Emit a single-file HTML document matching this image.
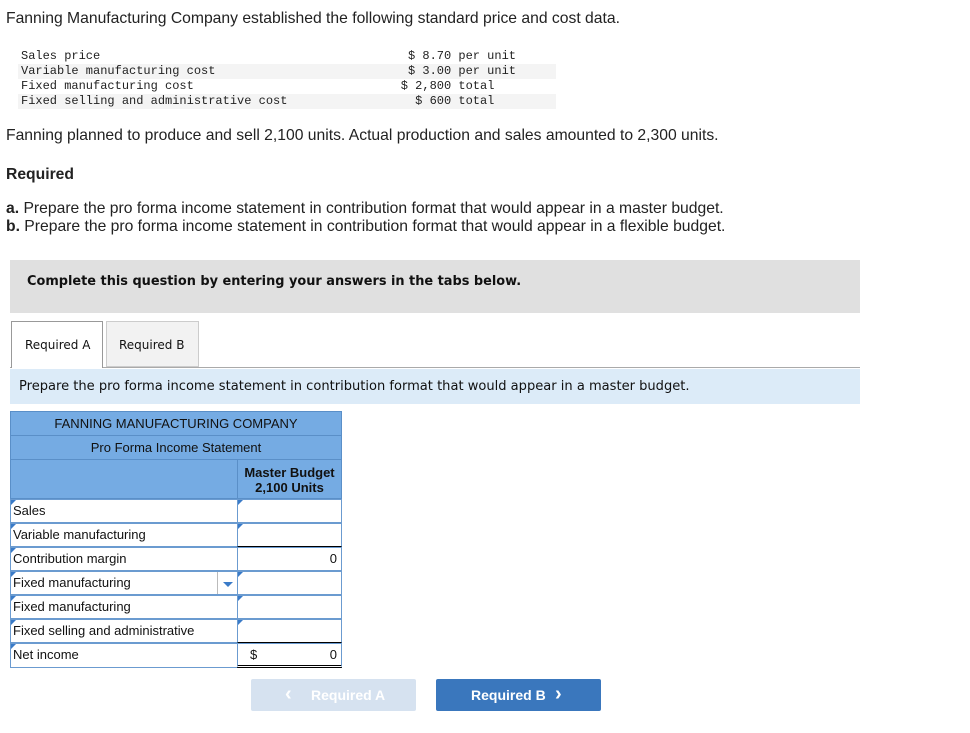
<!DOCTYPE html>
<html><head><style>
body{margin:0;width:970px;height:733px;background:#fff;font-family:"Liberation Sans",sans-serif;color:#222;position:relative;overflow:hidden}
.a{position:absolute;white-space:nowrap}
.m{font-family:"Liberation Mono",monospace;font-size:12px;color:#222}
.t{font-size:15.7px}
.c{position:absolute;box-sizing:border-box;font-family:"Liberation Sans",sans-serif;font-size:13px;color:#111}
.hd{background:#75abe3;border:1px solid #5a8fc8}
.cl{background:#fff;border:1px solid #6b9bd0;padding-left:2px;line-height:22px}
.tri{position:absolute;left:0;top:0;width:0;height:0;border-top:5px solid #3a7bc8;border-right:5px solid transparent}
</style></head><body>
<div class="a t" style="left:6px;top:10px">Fanning Manufacturing Company established the following standard price and cost data.</div>
<div class="a" style="left:18px;top:64px;width:538px;height:15px;background:#f4f4f4"></div>
<div class="a" style="left:18px;top:94px;width:538px;height:15px;background:#f4f4f4"></div>
<div class="a m" style="left:21px;top:49px;line-height:15px">Sales price<br>Variable manufacturing cost<br>Fixed manufacturing cost<br>Fixed selling and administrative cost</div>
<div class="a m" style="left:380px;top:49px;width:136px;line-height:15px;text-align:right">$ 8.70 per unit<br>$ 3.00 per unit<br>$ 2,800 total&nbsp;&nbsp;&nbsp;<br>$ 600 total&nbsp;&nbsp;&nbsp;</div>
<div class="a t" style="left:6px;top:127px">Fanning planned to produce and sell 2,100 units. Actual production and sales amounted to 2,300 units.</div>
<div class="a t" style="left:6px;top:166px;font-weight:bold">Required</div>
<div class="a t" style="left:6px;top:200px;line-height:18px"><b>a.</b> Prepare the pro forma income statement in contribution format that would appear in a master budget.<br><b>b.</b> Prepare the pro forma income statement in contribution format that would appear in a flexible budget.</div>
<div class="a" style="left:10px;top:260px;width:850px;height:53px;background:#e0e0e0"></div>
<div class="a" style="left:27px;top:274px;font-family:'DejaVu Sans',sans-serif;font-weight:bold;font-size:12.9px;color:#111">Complete this question by entering your answers in the tabs below.</div>
<div class="a" style="left:10px;top:367px;width:850px;height:1px;background:#aaa"></div>
<div class="a" style="left:11px;top:321px;width:92px;height:47px;border:1px solid #999;border-bottom:none;background:#fff;box-sizing:border-box"></div>
<div class="a" style="left:106px;top:321px;width:93px;height:46px;border:1px solid #ccc;background:#f2f2f2;box-sizing:border-box"></div>
<div class="a" style="left:25px;top:338px;font-family:'DejaVu Sans',sans-serif;font-size:12px;color:#111">Required A</div>
<div class="a" style="left:119px;top:338px;font-family:'DejaVu Sans',sans-serif;font-size:12px;color:#111">Required B</div>
<div class="a" style="left:10px;top:369px;width:850px;height:35px;background:#dcebf8"></div>
<div class="a" style="left:19px;top:379px;font-family:'DejaVu Sans',sans-serif;font-size:13.05px;color:#111">Prepare the pro forma income statement in contribution format that would appear in a master budget.</div>

<div class="c hd" style="left:10px;top:411px;width:332px;height:25px;text-align:center;line-height:23px">FANNING MANUFACTURING COMPANY</div>
<div class="c hd" style="left:10px;top:435px;width:332px;height:25px;text-align:center;line-height:23px">Pro Forma Income Statement</div>
<div class="c hd" style="left:10px;top:459px;width:228px;height:40px"></div>
<div class="c hd" style="left:237px;top:459px;width:105px;height:40px;text-align:center;font-weight:bold;line-height:15px;padding-top:5px">Master Budget<br>2,100 Units</div>

<div class="c cl" style="left:10px;top:499px;width:228px;height:24px"><span class="tri"></span>Sales</div>
<div class="c cl" style="left:237px;top:499px;width:105px;height:24px"><span class="tri"></span></div>
<div class="c cl" style="left:10px;top:523px;width:228px;height:24px"><span class="tri"></span>Variable manufacturing</div>
<div class="c cl" style="left:237px;top:523px;width:105px;height:24px;border-bottom:1px solid #000"><span class="tri"></span></div>
<div class="c cl" style="left:10px;top:547px;width:228px;height:24px"><span class="tri"></span>Contribution margin</div>
<div class="c cl" style="left:237px;top:547px;width:105px;height:24px;text-align:right;padding-right:4px">0</div>
<div class="c cl" style="left:10px;top:571px;width:228px;height:24px"><span class="tri"></span>Fixed manufacturing<span style="position:absolute;left:206px;top:0;width:1px;height:22px;background:#bbb"></span><span style="position:absolute;left:212px;top:10px;border-top:5px solid #3a7bc8;border-left:5px solid transparent;border-right:5px solid transparent"></span></div>
<div class="c cl" style="left:237px;top:571px;width:105px;height:24px"><span class="tri"></span></div>
<div class="c cl" style="left:10px;top:595px;width:228px;height:24px"><span class="tri"></span>Fixed manufacturing</div>
<div class="c cl" style="left:237px;top:595px;width:105px;height:24px"><span class="tri"></span></div>
<div class="c cl" style="left:10px;top:619px;width:228px;height:24px"><span class="tri"></span>Fixed selling and administrative</div>
<div class="c cl" style="left:237px;top:619px;width:105px;height:24px;border-bottom:1px solid #000"><span class="tri"></span></div>
<div class="c cl" style="left:10px;top:643px;width:228px;height:25px"><span class="tri"></span>Net income</div>
<div class="c cl" style="left:237px;top:643px;width:105px;height:25px;border-bottom:3px double #000;padding-left:12px">$<span style="position:absolute;right:4px">0</span></div>

<div class="a" style="left:251px;top:679px;width:165px;height:32px;background:#d6e2f0;border-radius:2px;color:#fff;font-weight:bold;font-size:14px;line-height:32px"><span style="position:absolute;left:34px;font-size:20px;top:-1px">&lsaquo;</span><span style="position:absolute;left:60px">Required A</span></div>
<div class="a" style="left:436px;top:679px;width:165px;height:32px;background:#3a77bd;border-radius:2px;color:#fff;font-weight:bold;font-size:14px;line-height:32px"><span style="position:absolute;left:35px">Required B</span><span style="position:absolute;left:119px;font-size:20px;top:-1px">&rsaquo;</span></div>
</body></html>
